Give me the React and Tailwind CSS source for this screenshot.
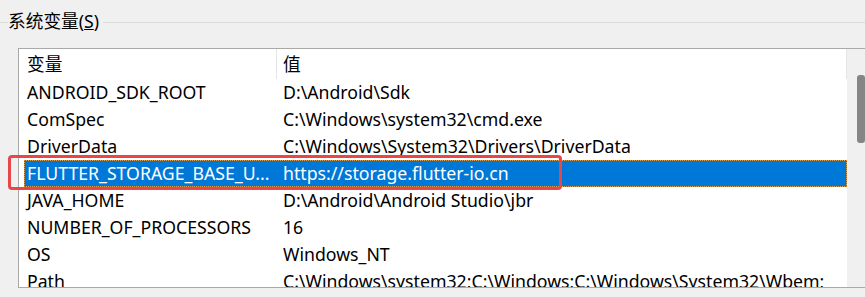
import React from 'react';

const rows = [
  { name: 'ANDROID_SDK_ROOT', value: 'D:\\Android\\Sdk' },
  { name: 'ComSpec', value: 'C:\\Windows\\system32\\cmd.exe' },
  { name: 'DriverData', value: 'C:\\Windows\\System32\\Drivers\\DriverData' },
  { name: 'FLUTTER_STORAGE_BASE_U...', value: 'https://storage.flutter-io.cn', selected: true },
  { name: 'JAVA_HOME', value: 'D:\\Android\\Android Studio\\jbr' },
  { name: 'NUMBER_OF_PROCESSORS', value: '16' },
  { name: 'OS', value: 'Windows_NT' },
  { name: 'Path', value: 'C:\\Windows\\system32;C:\\Windows;C:\\Windows\\System32\\Wbem;' },
];

const App = () => {
  return (
    <div className="relative w-[865px] h-[297px] overflow-hidden bg-[#f0f0f0] text-black text-[17.7px] font-['Noto_Sans','Noto_Sans_CJK_SC',sans-serif]">
      {/* group box legend */}
      <div className="flex items-center h-[24px] mt-[10px]">
        <div className="w-[8px] border-t border-[#dcdcdc]" />
        <span className="leading-none">
          系统变量(<span className="underline">S</span>)
        </span>
        <div className="flex-1 border-t border-[#dcdcdc] ml-[4px]" />
      </div>

      {/* list box */}
      <div className="ml-[18px] mt-[14px] h-[240px] flex border-t border-l border-b border-[#a9a9a9] bg-white">
        <div className="w-[832px] flex flex-col overflow-hidden">
          <div className="flex h-[30px] shrink-0 items-center">
            <div className="w-[258px] h-full pl-[8px] flex items-center border-r border-[#e5e5e5]">变量</div>
            <div className="flex-1 h-full pl-[6px] flex items-center border-r border-[#e5e5e5]">值</div>
          </div>
          {rows.map((r) => (
            <div key={r.name} className="flex h-[27px] shrink-0 pl-[5px]">
              <div className={r.selected ? 'flex flex-1 items-center bg-[#0078d7] text-white outline-1 outline-dotted outline-[#d9a35a] -outline-offset-1' : 'flex flex-1 items-center'}>
                <div className="w-[253px] pl-[3px] whitespace-nowrap overflow-hidden">{r.name}</div>
                <div className="flex-1 pl-[6px] whitespace-nowrap overflow-hidden">{r.value}</div>
              </div>
            </div>
          ))}
        </div>
        {/* scrollbar */}
        <div className="flex-1 bg-[#f0f0f0] pt-[26px] pl-[10px]">
          <div className="h-[68px] w-[8px] rounded-[3px] bg-[#858585]" />
        </div>
      </div>

      {/* annotation */}
      <div className="absolute left-[8px] top-[155px] w-[554px] h-[35px] border-[3px] border-[#e8474a] rounded-[4px]" />
    </div>
  );
};

export default App;
